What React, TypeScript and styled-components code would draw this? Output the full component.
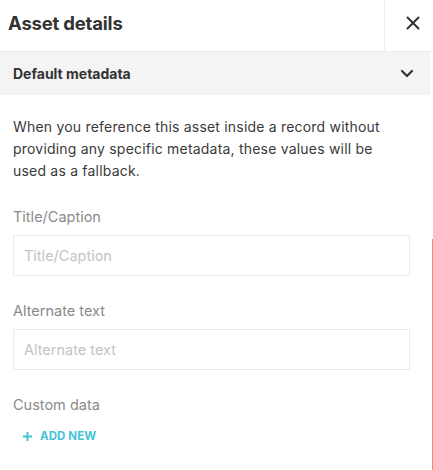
import React from "react";
import styled, { createGlobalStyle } from "styled-components";

const Global = createGlobalStyle`
  html, body { margin: 0; padding: 0; background: #fff; }
  body { font-family: "Inter", "Noto Sans", sans-serif; -webkit-font-smoothing: antialiased; }
  * { box-sizing: border-box; }
`;

const Page = styled.div`
  display: flex;
  width: 433px;
  height: 470px;
  overflow: hidden;
`;

const Panel = styled.div`
  width: 432px;
  display: flex;
  flex-direction: column;
`;

const EdgeLine = styled.div`
  width: 1px;
  margin-top: 239px;
  background: #f58b5c;
`;

const Header = styled.div`
  display: flex;
  height: 52px;
  border-bottom: 1px solid #ececec;
`;

const Title = styled.h1`
  flex: 1;
  margin: 0;
  padding: 0 0 6px 8px;
  display: flex;
  align-items: center;
  font-size: 18.5px;
  font-weight: 700;
  color: #333;
  letter-spacing: -0.2px;
`;

const CloseButton = styled.button`
  width: 48px;
  border: none;
  border-left: 1px solid #ececec;
  background: transparent;
  display: flex;
  align-items: center;
  justify-content: center;
  padding: 0 0 6px 8px;
  color: #333;
  cursor: pointer;
`;

const SectionHead = styled.div`
  height: 43px;
  margin-right: 2px;
  background: #f4f4f4;
  display: flex;
  align-items: center;
  justify-content: space-between;
  padding: 0 16px 0 13px;
`;

const SectionTitle = styled.span`
  font-size: 14px;
  font-weight: 700;
  color: #333;
`;

const Body = styled.div`
  padding: 21px 22px 0 13px;
  display: flex;
  flex-direction: column;
`;

const Intro = styled.p`
  margin: 0 14px 24px 0;
  font-size: 14px;
  line-height: 22px;
  letter-spacing: 0.2px;
  color: #3a3a3a;
`;

const Field = styled.div`
  display: flex;
  flex-direction: column;
  margin-bottom: 24px;
`;

const Label = styled.label`
  font-size: 14.5px;
  line-height: 22px;
  color: #8a8a8a;
  margin-bottom: 7px;
`;

const Input = styled.input`
  height: 41px;
  border: 1px solid #ebebeb;
  padding: 0 10px;
  font-family: inherit;
  font-size: 14.5px;
  color: #333;
  outline: none;
  &::placeholder { color: #c4c4c4; }
`;

const AddButton = styled.button`
  align-self: flex-start;
  margin: 6px 0 0 10px;
  border: none;
  background: transparent;
  display: flex;
  align-items: center;
  gap: 8px;
  padding: 0;
  font-family: inherit;
  font-size: 11.5px;
  font-weight: 700;
  color: #46c3d6;
  text-transform: uppercase;
  letter-spacing: 0.1px;
  cursor: pointer;
`;

export default function App() {
  return (
    <>
      <Global />
      <Page>
        <Panel>
          <Header>
            <Title>Asset details</Title>
            <CloseButton aria-label="Close">
              <svg width="14" height="14" viewBox="0 0 14 14">
                <path d="M1.5 1.5L12.5 12.5M12.5 1.5L1.5 12.5" stroke="#333" strokeWidth="2" strokeLinecap="round" />
              </svg>
            </CloseButton>
          </Header>
          <SectionHead>
            <SectionTitle>Default metadata</SectionTitle>
            <svg width="14" height="9" viewBox="0 0 14 9">
              <path d="M2 2L7 7L12 2" stroke="#333" strokeWidth="2.2" fill="none" strokeLinecap="round" strokeLinejoin="round" />
            </svg>
          </SectionHead>
          <Body>
            <Intro>
              When you reference this asset inside a record without providing any specific metadata, these values will be used as a fallback.
            </Intro>
            <Field>
              <Label>Title/Caption</Label>
              <Input placeholder="Title/Caption" />
            </Field>
            <Field>
              <Label>Alternate text</Label>
              <Input placeholder="Alternate text" />
            </Field>
            <Label>Custom data</Label>
            <AddButton>
              <svg width="9" height="9" viewBox="0 0 9 9">
                <path d="M4.5 0V9M0 4.5H9" stroke="#46c3d6" strokeWidth="2" />
              </svg>
              Add new
            </AddButton>
          </Body>
        </Panel>
        <EdgeLine />
      </Page>
    </>
  );
}
